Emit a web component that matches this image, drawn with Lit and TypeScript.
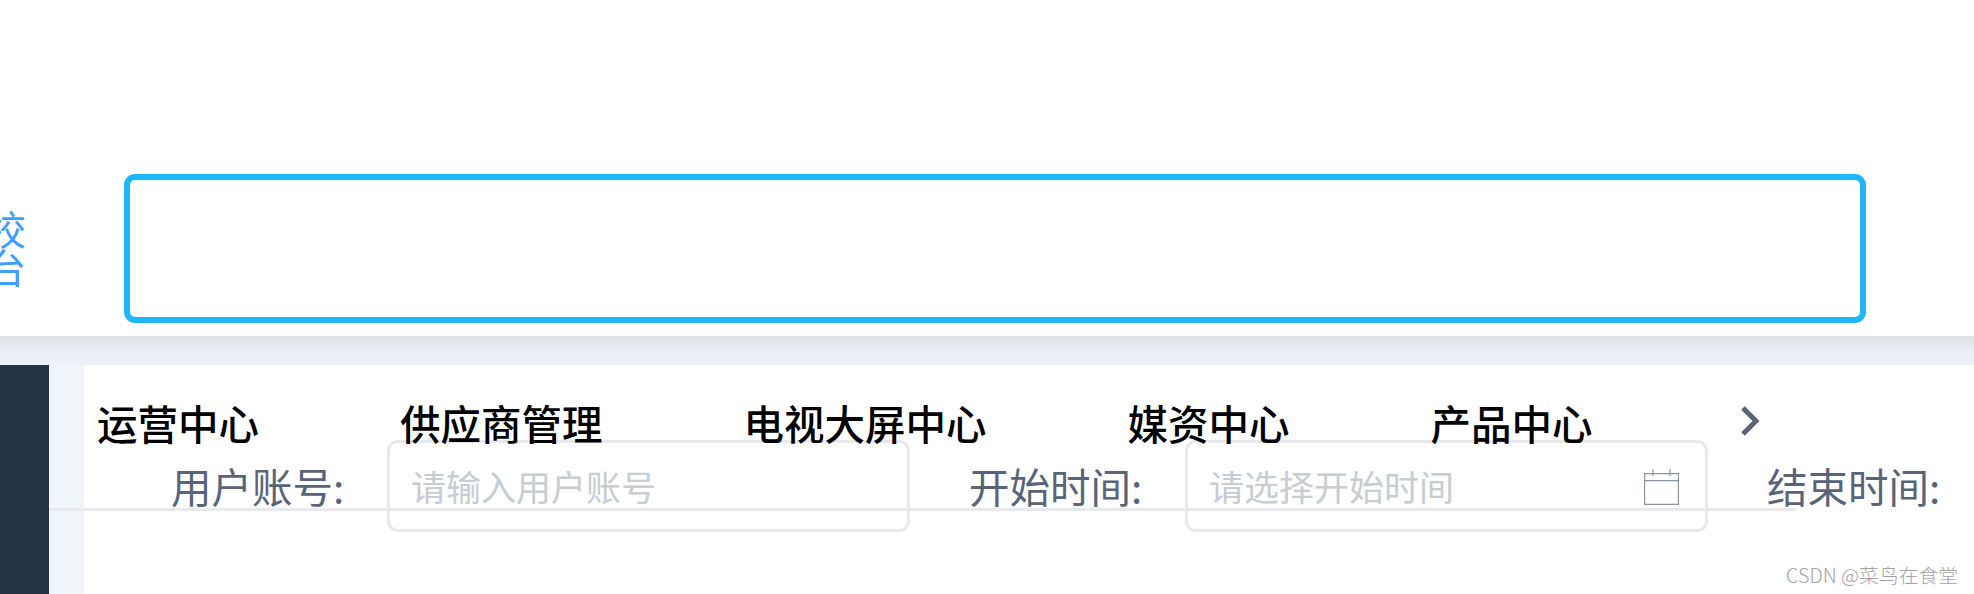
import { LitElement, html, css } from 'lit';
import { customElement } from 'lit/decorators.js';

const CJK = `"Noto Sans CJK SC", "Noto Sans", sans-serif`;

@customElement('app-root')
export class AppRoot extends LitElement {
  private tabs = ['运营中心', '供应商管理', '电视大屏中心', '媒资中心', '产品中心'];

  static styles = css`
    :host {
      display: block;
      position: relative;
      width: 1974px;
      height: 594px;
      overflow: hidden;
      background: #f0f5f9;
      font-family: ${css([CJK] as unknown as TemplateStringsArray)};
    }
    .header {
      display: flex;
      height: 336px;
      box-sizing: border-box;
      padding-top: 174px;
      background: #fff;
    }
    .brand {
      width: 40px;
      height: 80px;
      margin: 35px 98px 0 -14px;
      flex: none;
      font-size: 40px;
      line-height: 38px;
      font-weight: 400;
      color: #409eff;
    }
    .highlight {
      width: 1742px;
      height: 149px;
      box-sizing: border-box;
      border: 6px solid #1eb6ff;
      border-radius: 11px;
      flex: none;
    }
    .band {
      height: 29px;
      background: linear-gradient(#dfe3e7, #e9eef4 60%, #edf2f9);
    }
    .body {
      display: flex;
      height: 229px;
    }
    .sidebar {
      width: 49px;
      flex: none;
      background: #233545;
    }
    .strip {
      width: 35px;
      flex: none;
      background: #f0f5f9;
    }
    .main {
      flex: 1;
      min-width: 0;
      background: #fff;
      overflow: hidden;
    }
    .tabs {
      display: flex;
      align-items: center;
      gap: 141px;
      height: 40px;
      padding: 38px 0 0 13px;
      position: relative;
      z-index: 1;
    }
    .tab {
      font-size: 40.5px;
      line-height: 40px;
      font-weight: 500;
      color: #000;
      white-space: nowrap;
    }
    .next {
      width: 20px;
      height: 32px;
      margin: -4px 0 0 6px;
      flex: none;
      color: #5a6478;
    }
    .form {
      display: flex;
      align-items: flex-start;
      margin-top: -3px;
      padding-left: 87px;
    }
    .label {
      width: 175px;
      flex: none;
      margin-right: 41px;
      padding-top: 21px;
      font-size: 40.5px;
      line-height: 50px;
      font-weight: 400;
      color: #5a6478;
      white-space: nowrap;
    }
    .field {
      display: flex;
      align-items: center;
      width: 523px;
      height: 92px;
      flex: none;
      box-sizing: border-box;
      margin-right: 59px;
      padding: 0 26px 0 21px;
      border: 3px solid #e7e9ec;
      border-radius: 11px;
    }
    .field input {
      flex: 1;
      min-width: 0;
      border: none;
      outline: none;
      padding: 0;
      background: transparent;
      font: 400 35px/44px ${css([CJK] as unknown as TemplateStringsArray)};
    }
    .field input::placeholder {
      color: #c8ccd3;
      opacity: 1;
    }
    .calendar {
      width: 35px;
      height: 36px;
      flex: none;
      margin-top: 2px;
      color: #8c93a3;
    }
    .rule {
      position: absolute;
      left: 49px;
      top: 508px;
      width: 1747px;
      height: 3px;
      background: #e8eaed;
      z-index: 2;
    }
    .watermark {
      position: absolute;
      right: 16px;
      top: 562px;
      font-size: 19.8px;
      line-height: 26px;
      font-weight: 300;
      color: #a3a3a3;
      white-space: nowrap;
      z-index: 2;
    }
  `;

  render() {
    return html`
      <div class="header">
        <div class="brand">校<br />台</div>
        <div class="highlight"></div>
      </div>
      <div class="band"></div>
      <div class="body">
        <div class="sidebar"></div>
        <div class="strip"></div>
        <div class="main">
          <div class="tabs">
            ${this.tabs.map(tab => html`<div class="tab">${tab}</div>`)}
            <svg class="next" viewBox="0 0 20 32" fill="none" stroke="currentColor" stroke-width="5">
              <path d="M3 3l13 13-13 13" />
            </svg>
          </div>
          <div class="form">
            <div class="label">用户账号:</div>
            <div class="field"><input placeholder="请输入用户账号" /></div>
            <div class="label">开始时间:</div>
            <div class="field">
              <input placeholder="请选择开始时间" />
              <svg class="calendar" viewBox="0 0 35 36" fill="none" stroke="currentColor" stroke-width="1.2">
                <path d="M.6 4.6h33.8v30.8H.6zM.6 11.6h33.8M9 0v7M26 0v7" />
              </svg>
            </div>
            <div class="label">结束时间:</div>
          </div>
        </div>
      </div>
      <div class="rule"></div>
      <div class="watermark">CSDN @菜鸟在食堂</div>
    `;
  }
}
